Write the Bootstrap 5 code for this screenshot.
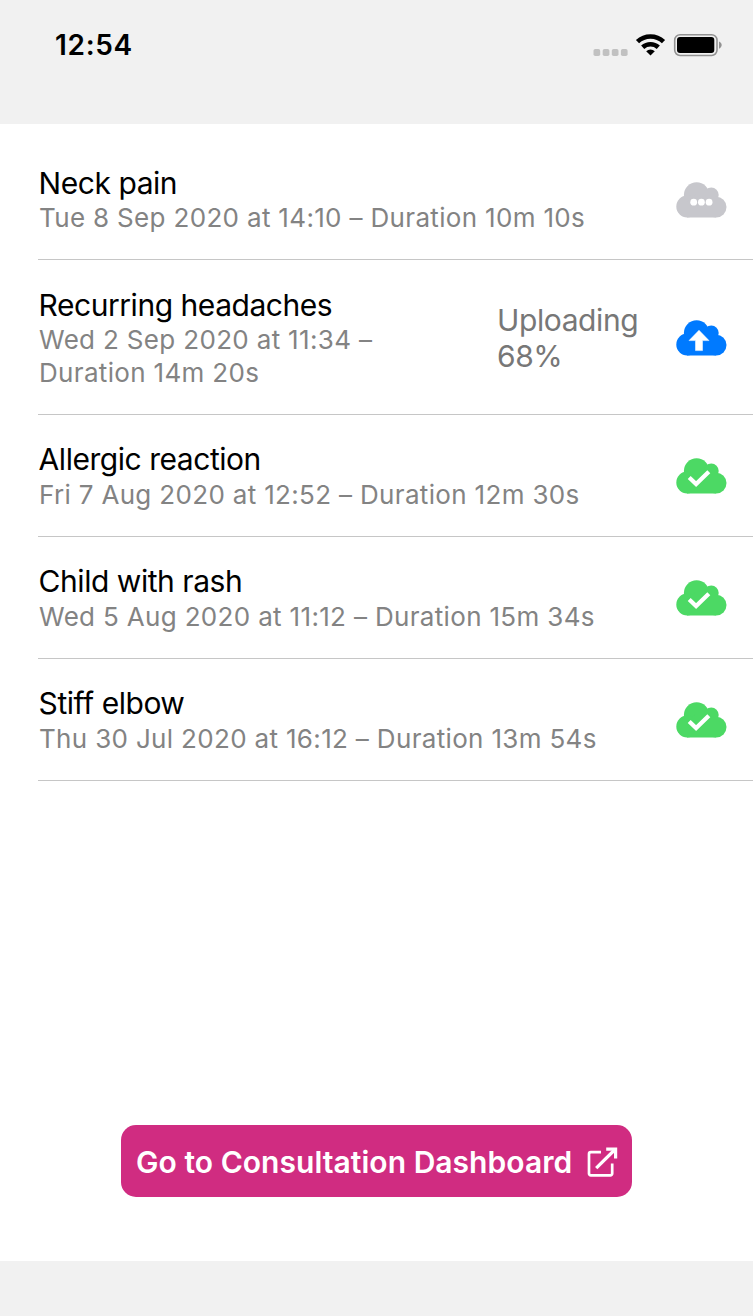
<!DOCTYPE html>
<html lang="en">
<head>
<meta charset="utf-8">
<meta name="viewport" content="width=device-width, initial-scale=1">
<title>Consultations</title>
<link href="https://cdn.jsdelivr.net/npm/bootstrap@5.3.0/dist/css/bootstrap.min.css" rel="stylesheet">
<style>
body { font-family: Inter, "Liberation Sans", sans-serif; color: #000; background: #fff; }
.screen { height: 1316px; width: 753px; }
.status-bar { height: 124px; background: #f1f1f1; padding: 24px 31px 0 55px; }
.clock { font-size: 28px; line-height: 43px; font-weight: 600; letter-spacing: .7px; }
.consultations { padding: 14px 0 0 38px; }
.consultation { padding: 27px 26px 25px 0; border-bottom: 1px solid #c6c6c6; }
.title-line { font-size: 30px; line-height: 36px; letter-spacing: -.46px; padding-left: .6px; }
.meta-line { font-size: 26px; line-height: 33px; color: #838383; padding-left: 1px; letter-spacing: .33px; }
.synced { padding-top: 26px; }
.synced .title-line { padding-bottom: 1px; }
.synced .cloud { margin-bottom: 1px; }
.meta-short { width: 360px; }
.progress-note { font-size: 30px; line-height: 36px; color: #777; width: 179px; letter-spacing: -.4px; }
.cloud { width: 51px; height: 36px; }
.waiting { color: #c7c7cc; }
.uploading { color: #007aff; }
.done { color: #4cd964; }
.dashboard-btn { --bs-btn-bg: #d02c81; --bs-btn-color: #fff; --bs-btn-border-width: 0; --bs-btn-hover-bg: #b8246f; --bs-btn-hover-color: #fff;
  width: 511px; height: 72px; border-radius: 15px; padding: 2px 14px 0 15px; font-size: 30px; font-weight: 600; letter-spacing: .04px; margin-bottom: 64px; }
.home-bar { height: 55px; background: #f1f1f1; }
</style>
</head>
<body>
<svg class="d-none">
  <symbol id="cloud" viewBox="0 0 51 36">
    <g fill="currentColor">
      <circle cx="20.6" cy="12.9" r="12.7"/><circle cx="35.3" cy="12.9" r="7.4"/>
      <circle cx="11.2" cy="24.5" r="10.9"/><circle cx="40.2" cy="25.1" r="10.3"/>
      <path d="M11 35.4V20L20 12h15l5 5v18.4z"/>
    </g>
  </symbol>
</svg>
<div class="screen d-flex flex-column">
  <header class="status-bar d-flex justify-content-between align-items-start flex-shrink-0">
    <div class="clock">12:54</div>
    <svg width="130" height="26" viewBox="592 32 130 26" class="mt-2">
      <g fill="#c1c1c1"><rect x="593.5" y="49" width="6.7" height="7" rx="1.8"/><rect x="602.7" y="49" width="6.7" height="7" rx="1.8"/><rect x="611.8" y="49" width="6.7" height="7" rx="1.8"/><rect x="620.9" y="49" width="6.7" height="7" rx="1.8"/></g>
      <g fill="none" stroke="#000" stroke-width="4.6"><path d="M637.5 41.6a19 19 0 0 1 26 0"/><path d="M642.7 47.3a11.5 11.5 0 0 1 15.6 0"/></g>
      <path d="M646.2 51.2a6 6 0 0 1 8.600 0l-4.300 4.400z"/>
      <rect x="674.7" y="34.7" width="42.3" height="20.8" rx="5.4" fill="none" stroke="#929292" stroke-width="1.6"/>
      <rect x="677" y="37" width="37.300" height="16" rx="3"/>
      <path d="M719 41.400c3.600 1.600 3.600 5.800 0 7.400z" fill="#929292"/>
    </svg>
  </header>

  <main class="flex-grow-1 d-flex flex-column">
    <section class="consultations">
      <div class="consultation d-flex align-items-center justify-content-between">
        <div><div class="title-line">Neck pain</div><div class="meta-line">Tue 8 Sep 2020 at 14:10 – Duration 10m 10s</div></div>
        <svg class="cloud waiting" viewBox="0 0 51 36"><use href="#cloud"/><g fill="#fff"><circle cx="17.7" cy="20.2" r="3.400"/><circle cx="25.4" cy="20.2" r="3.400"/><circle cx="33.1" cy="20.2" r="3.400"/></g></svg>
      </div>
      <div class="consultation d-flex align-items-center justify-content-between">
        <div class="meta-short"><div class="title-line">Recurring headaches</div><div class="meta-line">Wed 2 Sep 2020 at 11:34 – Duration 14m 20s</div></div>
        <div class="d-flex align-items-center"><div class="progress-note">Uploading<br>68%</div>
        <svg class="cloud uploading" viewBox="0 0 51 36"><use href="#cloud"/><path d="M23 10.2l10 10.4h-6.5v10h-7v-10H13z" fill="#fff" stroke="#fff" stroke-width=".5" stroke-linejoin="round"/></svg></div>
      </div>
      <div class="consultation synced d-flex align-items-center justify-content-between">
        <div><div class="title-line">Allergic reaction</div><div class="meta-line">Fri 7 Aug 2020 at 12:52 – Duration 12m 30s</div></div>
        <svg class="cloud done" viewBox="0 0 51 36"><use href="#cloud"/><path d="M13.2 19.4l6.9 6.6 12.7-12.3" fill="none" stroke="#fff" stroke-width="4.2"/></svg>
      </div>
      <div class="consultation synced d-flex align-items-center justify-content-between">
        <div><div class="title-line">Child with rash</div><div class="meta-line">Wed 5 Aug 2020 at 11:12 – Duration 15m 34s</div></div>
        <svg class="cloud done" viewBox="0 0 51 36"><use href="#cloud"/><path d="M13.2 19.4l6.9 6.6 12.7-12.3" fill="none" stroke="#fff" stroke-width="4.2"/></svg>
      </div>
      <div class="consultation synced d-flex align-items-center justify-content-between">
        <div><div class="title-line">Stiff elbow</div><div class="meta-line">Thu 30 Jul 2020 at 16:12 – Duration 13m 54s</div></div>
        <svg class="cloud done" viewBox="0 0 51 36"><use href="#cloud"/><path d="M13.2 19.4l6.9 6.6 12.7-12.3" fill="none" stroke="#fff" stroke-width="4.2"/></svg>
      </div>
    </section>
    <button type="button" class="btn dashboard-btn mt-auto mx-auto d-flex align-items-center justify-content-between text-nowrap">
      <span>Go to Consultation Dashboard</span>
      <svg width="31" height="31" viewBox="0 0 31 31" fill="none" stroke="#fff" stroke-width="2.7">
        <path d="M14 5.200H3.800A1.800 1.800 0 0 0 2 7V26.600a1.800 1.800 0 0 0 1.800 1.800H23.400a1.800 1.800 0 0 0 1.800-1.800V16.500"/><path d="M9.200 21.200L27.500 3" stroke-width="3.200"/><path d="M19.200 2.200H28.600V11.500" stroke-width="3.200"/>
      </svg>
    </button>
  </main>
  <footer class="home-bar flex-shrink-0"></footer>
</div>
<script src="https://cdn.jsdelivr.net/npm/bootstrap@5.3.0/dist/js/bootstrap.bundle.min.js"></script>
</body>
</html>
